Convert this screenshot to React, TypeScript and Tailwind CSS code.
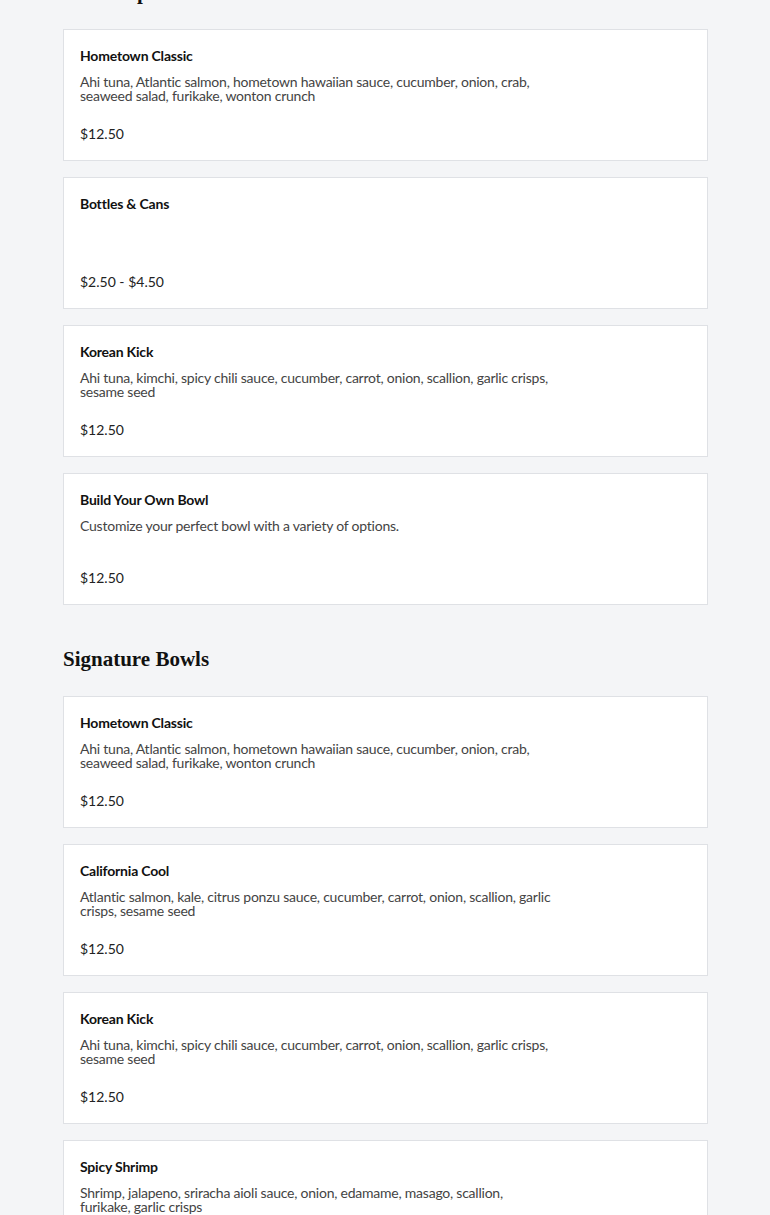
type Item = { name: string; desc?: string; price: string };

const popular: Item[] = [
  {
    name: "Hometown Classic",
    desc: "Ahi tuna, Atlantic salmon, hometown hawaiian sauce, cucumber, onion, crab, seaweed salad, furikake, wonton crunch",
    price: "$12.50",
  },
  { name: "Bottles & Cans", price: "$2.50 - $4.50" },
  {
    name: "Korean Kick",
    desc: "Ahi tuna, kimchi, spicy chili sauce, cucumber, carrot, onion, scallion, garlic crisps, sesame seed",
    price: "$12.50",
  },
  {
    name: "Build Your Own Bowl",
    desc: "Customize your perfect bowl with a variety of options.",
    price: "$12.50",
  },
];

const signature: Item[] = [
  {
    name: "Hometown Classic",
    desc: "Ahi tuna, Atlantic salmon, hometown hawaiian sauce, cucumber, onion, crab, seaweed salad, furikake, wonton crunch",
    price: "$12.50",
  },
  {
    name: "California Cool",
    desc: "Atlantic salmon, kale, citrus ponzu sauce, cucumber, carrot, onion, scallion, garlic crisps, sesame seed",
    price: "$12.50",
  },
  {
    name: "Korean Kick",
    desc: "Ahi tuna, kimchi, spicy chili sauce, cucumber, carrot, onion, scallion, garlic crisps, sesame seed",
    price: "$12.50",
  },
  {
    name: "Spicy Shrimp",
    desc: "Shrimp, jalapeno, sriracha aioli sauce, onion, edamame, masago, scallion, furikake, garlic crisps",
    price: "$12.50",
  },
];

// Menu card
const MenuCard = ({ item }: { item: Item }) => {
  return (
    <div className="bg-white border border-[#dfe1e5] p-4">
      <h3 className="text-sm leading-5 font-bold tracking-[-0.2px] text-[#111]">{item.name}</h3>
      <p className="mt-[9px] h-[49px] max-w-[474px] text-sm leading-[14px] tracking-[-0.23px] text-[#444]">
        {item.desc}
      </p>
      <div className="text-sm leading-5 text-[#222]">{item.price}</div>
    </div>
  );
};

const Section = ({ title, items }: { title: string; items: Item[] }) => {
  return (
    <section>
      <h2 className="mb-[21px] text-[21px] leading-8 font-bold text-[#111] font-['Liberation_Serif',serif]">
        {title}
      </h2>
      <div className="flex flex-col gap-4">
        {items.map((item, i) => (
          <MenuCard key={i} item={item} />
        ))}
      </div>
    </section>
  );
};

export default function App() {
  return (
    <div className="min-h-screen bg-[#f4f5f7] font-['Lato',sans-serif]">
      <div className="-mt-6 ml-[63px] w-[645px] flex flex-col gap-[38px] pb-10">
        <Section title="Most Popular" items={popular} />
        <Section title="Signature Bowls" items={signature} />
      </div>
    </div>
  );
}
